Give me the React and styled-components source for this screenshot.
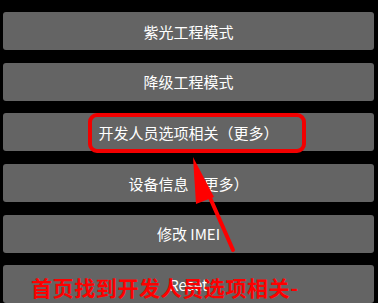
import React from 'react'
import styled, { createGlobalStyle } from 'styled-components'

const GlobalStyle = createGlobalStyle`
    html, body {
        margin: 0;
        padding: 0;
        background: #000;
    }
    body {
        font-family: "Noto Sans CJK SC", "Noto Sans", sans-serif;
    }
`

const Screen = styled.div`
    position: relative;
    width: 378px;
    height: 303px;
    overflow: hidden;
    background: #000;
`

const ButtonList = styled.div`
    display: flex;
    flex-direction: column;
    gap: 12.7px;
    padding: 12px 4px 0 3px;
`

const MenuButton = styled.div`
    height: 38px;
    border-radius: 3px;
    background: #646464;
    color: #fff;
    font-size: 15px;
    display: flex;
    align-items: center;
    justify-content: center;
`

const Highlight = styled.div`
    position: absolute;
    left: 88px;
    top: 113px;
    width: 218px;
    height: 40px;
    box-sizing: border-box;
    border: 4px solid #f20000;
    border-radius: 9px;
`

const Arrow = styled.svg`
    position: absolute;
    left: 0;
    top: 0;
    pointer-events: none;
`

const Caption = styled.div`
    position: absolute;
    left: 31px;
    top: 273px;
    color: #ff0000;
    font-size: 21px;
    font-weight: 700;
    letter-spacing: 0.6px;
    line-height: 28px;
    white-space: nowrap;
`

const items = ['紫光工程模式', '降级工程模式', '开发人员选项相关（更多）', '设备信息（更多）', '修改 IMEI', 'Reset']

export default function App() {
    return (
        <Screen>
            <GlobalStyle />
            <ButtonList>
                {items.map((label, i) => (
                    <MenuButton key={i}>{label}</MenuButton>
                ))}
            </ButtonList>
            <Highlight />
            <Arrow width="378" height="303" viewBox="0 0 378 303">
                <line x1="233" y1="250" x2="204" y2="184" stroke="#ff0000" strokeWidth="4" strokeLinecap="round" />
                <polygon points="193,157 214,197 196,204" fill="#ff0000" />
            </Arrow>
            <Caption>首页找到开发人员选项相关-</Caption>
        </Screen>
    )
}
